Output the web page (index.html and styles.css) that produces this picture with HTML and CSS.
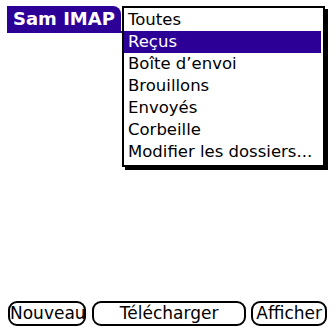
FILE: index.html
```html
<!DOCTYPE html>
<html>
<head>
<meta charset="utf-8">
<link rel="stylesheet" href="styles.css">
</head>
<body>
<div class="screen">
  <div class="titlebar">
    <div class="tab">Sam IMAP</div>
  </div>
  <div class="content"></div>
  <div class="buttons">
    <div class="btn btn-new">Nouveau</div>
    <div class="btn btn-dl">Télécharger</div>
    <div class="btn btn-show">Afficher</div>
  </div>
  <ul class="popup">
    <li>Toutes</li>
    <li class="sel">Reçus</li>
    <li>Boîte d’envoi</li>
    <li>Brouillons</li>
    <li>Envoyés</li>
    <li>Corbeille</li>
    <li>Modifier les dossiers...</li>
  </ul>
</div>
</body>
</html>
```
FILE: styles.css
```css
html, body {
  margin: 0;
  padding: 0;
  background: #fff;
}
.screen {
  position: relative;
  width: 334px;
  height: 334px;
  display: flex;
  flex-direction: column;
  padding: 6px 7px 8px 7px;
  box-sizing: border-box;
  font-family: "DejaVu Sans", sans-serif;
  color: #000;
}
.titlebar {
  height: 25px;
  border-bottom: 2px solid #2c0096;
  display: flex;
}
.tab {
  background: #2c0096;
  color: #fff;
  font-weight: bold;
  font-size: 18px;
  line-height: 25px;
  padding: 0 6px 0 6px;
  border-top-right-radius: 8px;
}
.content {
  flex: 1;
}
.buttons {
  display: flex;
  height: 25px;
}
.btn {
  border: 2px solid #000;
  border-radius: 9px;
  box-sizing: border-box;
  font-size: 17px;
  line-height: 20px;
  text-align: center;
}
.btn-new { width: 78px; margin-left: 1px; }
.btn-dl { width: 155px; margin-left: 6px; }
.btn-show { width: 76px; margin-left: 5px; }
.popup {
  position: absolute;
  left: 122px;
  top: 6px;
  width: 203px;
  height: 161px;
  margin: 0;
  padding: 1px 0;
  list-style: none;
  background: #fff;
  border: 2px solid #000;
  box-shadow: 3px 3px 0 #000;
  box-sizing: border-box;
}
.popup li {
  font-size: 16.5px;
  line-height: 22px;
  padding-left: 4px;
}
.popup li.sel {
  background: #2c0096;
  color: #fff;
  margin-right: 2px;
}
```
